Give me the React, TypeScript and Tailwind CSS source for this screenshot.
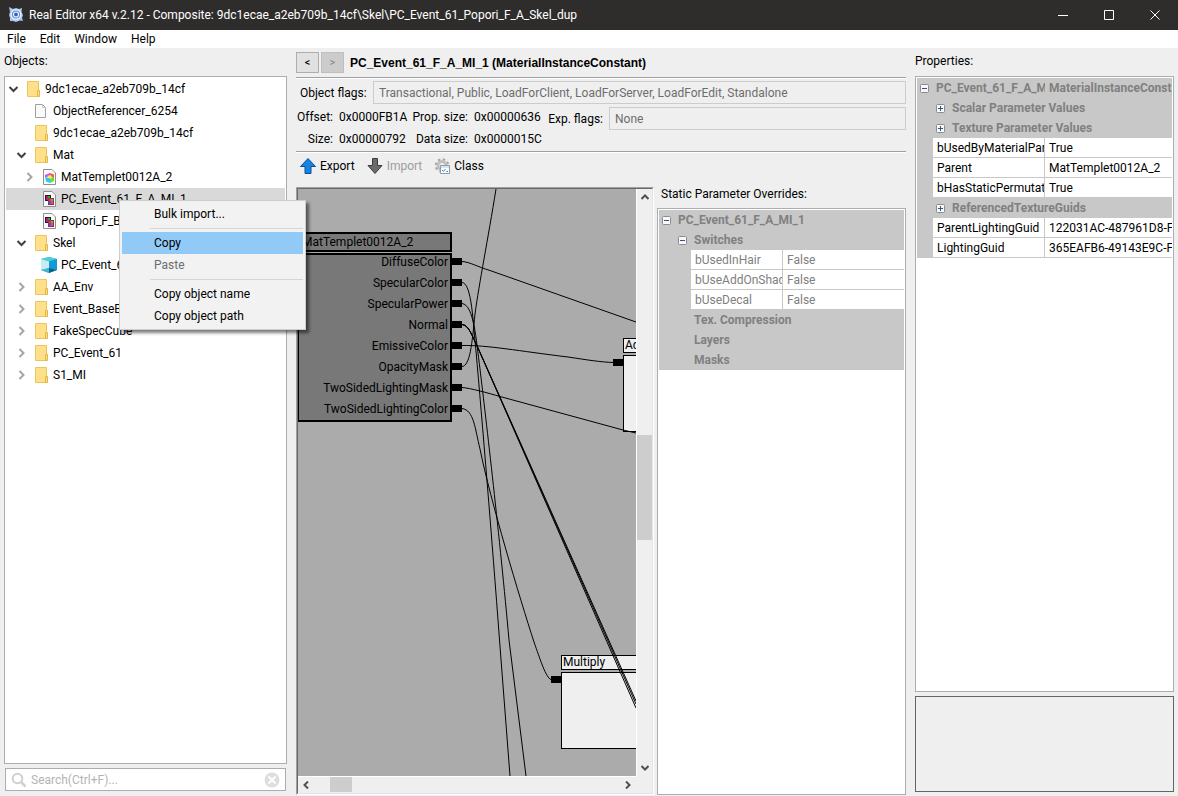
import clsx from "clsx";
import type { ReactNode } from "react";

type IconName = "folder" | "file" | "material" | "instance" | "mesh";

type TreeNode = {
  label: string;
  level: number;
  icon: IconName;
  state?: "open" | "closed";
  selected?: boolean;
};

const tree: TreeNode[] = [
  { label: "9dc1ecae_a2eb709b_14cf", level: 0, icon: "folder", state: "open" },
  { label: "ObjectReferencer_6254", level: 1, icon: "file" },
  { label: "9dc1ecae_a2eb709b_14cf", level: 1, icon: "folder" },
  { label: "Mat", level: 1, icon: "folder", state: "open" },
  { label: "MatTemplet0012A_2", level: 2, icon: "material", state: "closed" },
  { label: "PC_Event_61_F_A_MI_1", level: 2, icon: "instance", selected: true },
  { label: "Popori_F_B", level: 2, icon: "instance" },
  { label: "Skel", level: 1, icon: "folder", state: "open" },
  { label: "PC_Event_6", level: 2, icon: "mesh" },
  { label: "AA_Env", level: 1, icon: "folder", state: "closed" },
  { label: "Event_BaseBo", level: 1, icon: "folder", state: "closed" },
  { label: "FakeSpecCube", level: 1, icon: "folder", state: "closed" },
  { label: "PC_Event_61", level: 1, icon: "folder", state: "closed" },
  { label: "S1_MI", level: 1, icon: "folder", state: "closed" },
];

const levelPadding = ["pl-0", "pl-2", "pl-4"];

const pins = [
  "DiffuseColor",
  "SpecularColor",
  "SpecularPower",
  "Normal",
  "EmissiveColor",
  "OpacityMask",
  "TwoSidedLightingMask",
  "TwoSidedLightingColor",
];

// Wires are in canvas coordinates
const wires = [
  "M164 72.5C172 73 180 78 192 81.500L338 133",
  "M164 93.500C174 94 175 135 178 162C184 230 194 350 201.500 451L212 587",
  "M164 114.500C176 116 178 150 182 180C188 230 202 350 211 451L228 587",
  "M164 135.500C171 136 174 147 180 159L338 512",
  "M164 135.500C171 136 174 147 180 159L338 515",
  "M164 135.500C171 136 174 147 180 159L338 519",
  "M164 156.500C190 156 220 162 270 168C290 171 302 173 315 173.500",
  "M164 177.500C172 177 174 155 177 125C181 95 190 50 198 0",
  "M164 198.500C172 199 190 204 202 207.500L325 241L338 244",
  "M164 219.500C176 221 177 240 182 260C192 310 222 410 236 453C242 470 248 489 253 490.500",
];

function Chevron({ open }: { open: boolean }) {
  return (
    <svg viewBox="0 0 16 16" className="block size-4" fill="none" strokeWidth="2">
      {open ? (
        <path d="M3.500 6L7.500 10L11.500 6" stroke="#404040" />
      ) : (
        <path d="M5.500 4L9.500 8L5.500 12" stroke="#a6a6a6" />
      )}
    </svg>
  );
}

function Page() {
  return (
    <path d="M2.500 0.500H11L14.500 4V15.500H2.500Z" fill="#fafafa" stroke="#8f8f8f" strokeWidth="1" />
  );
}

function TreeIcon({ name }: { name: IconName }) {
  return (
    <svg viewBox="0 0 16 16" className="block size-4 shrink-0">
      {name === "folder" && (
        <>
          <path d="M2.500 0.500H13.500V15.500H2.500Z" fill="#ffe08a" stroke="#ecc658" />
          <path d="M12.500 9.500H14.500V15.500H12.500Z" fill="#ffe08a" stroke="#e3b63f" />
        </>
      )}
      {name === "file" && (
        <>
          <path d="M2.500 1.500H9.500L12.500 4.500V14.500H2.500Z" fill="#fafafa" stroke="#a0a0a0" />
          <path d="M9.500 1.500V4.500H12.500" fill="none" stroke="#c8c8c8" />
        </>
      )}
      {name === "material" && (
        <>
          <Page />
          <path d="M4 6L9 4L9 8L4 8Z" fill="#c650f0" />
          <path d="M9 4L13 5.500V9L9 9Z" fill="#ff5a3c" />
          <path d="M4 8L9 9V14L5 12.500Z" fill="#30c8f0" />
          <path d="M9 9L13 8V12L9 14Z" fill="#5fe03c" />
          <path d="M6 7L9.500 6L11.500 8.500L9 10Z" fill="#ffe65a" />
        </>
      )}
      {name === "instance" && (
        <>
          <Page />
          <path d="M4 4H10V10H4Z" fill="#301820" />
          <path d="M5 5H7V7H5Z" fill="#c02040" />
          <path d="M7 5H9V7H7Z" fill="#20b040" />
          <path d="M5 7H7V9H5Z" fill="#a020c0" />
          <path d="M7 7H13V14H7Z" fill="#a03040" />
          <path d="M8 8H10V10H8Z" fill="#ff3030" />
          <path d="M10 8H12V10H10Z" fill="#30d050" />
          <path d="M8 10H10V13H8Z" fill="#3060ff" />
          <path d="M10 10H12V13H10Z" fill="#f04868" />
        </>
      )}
      {name === "mesh" && (
        <>
          <path d="M0 2L8 0L16 2V13L8 16L0 13Z" fill="#29b6dc" />
          <path d="M0 2L8 0L16 2L8 4.500Z" fill="#4fc9dc" />
          <path d="M0 2L8 4.500V11L0 13Z" fill="#c4eef4" />
          <path d="M8 4.500L16 2V13L8 11Z" fill="#109cd4" />
          <path d="M0 13L8 11V16Z" fill="#43b7c8" />
          <path d="M8 11L16 13L8 16Z" fill="#08648c" />
        </>
      )}
    </svg>
  );
}

function AppIcon() {
  return (
    <svg viewBox="0 0 16 16" className="block size-4">
      <path
        d="M1 0L5 2L8 1L11 2L14 1L13.500 5L15 8L14 11L15 14L12 13.500L8 15L5 14L2 14L2 11L1 8L2 5Z"
        fill="#a9c4ee"
      />
      <circle cx="8" cy="7.500" r="4.800" fill="#5a86d8" stroke="#e4ecfa" strokeWidth="1.500" />
      <circle cx="8" cy="7.500" r="2.500" fill="#2f60c0" stroke="#f4f8ff" strokeWidth="1.200" />
    </svg>
  );
}

function ArrowIcon({ down }: { down?: boolean }) {
  return (
    <svg viewBox="0 0 16 16" className="block size-4">
      {down ? (
        <path d="M5.500 0.500H10.500V7.500H15L8 15.500L1 7.500H5.500Z" fill="#6b6b6b" stroke="#3c3c3c" />
      ) : (
        <path d="M8 0.500L15.500 8.500H11V15.500H5V8.500H0.500Z" fill="#1583e0" stroke="#0b4f98" />
      )}
    </svg>
  );
}

function ClassIcon() {
  return (
    <svg viewBox="0 0 16 16" className="block size-4" fill="none">
      <circle cx="8" cy="7.500" r="4" stroke="#c0c0c0" strokeWidth="3" />
      <circle cx="8" cy="7.500" r="6.300" stroke="#a8a8a8" strokeWidth="2" strokeDasharray="2.500 2.450" />
      <path d="M6.500 7.500H15.500V15.500H6.500Z" fill="#fff" stroke="#8c9aa8" />
      <path d="M7 9H15" stroke="#b8c4d0" />
      <path d="M8 12L9.500 13.500L11.500 11" stroke="#2f86e0" />
      <path d="M12.500 13.500H14" stroke="#2f86e0" />
    </svg>
  );
}

function Expander({ open }: { open: boolean }) {
  return (
    <button aria-label={open ? "Collapse" : "Expand"} className="block size-[9px] shrink-0">
      <svg viewBox="0 0 9 9" className="block size-full">
        <rect x="0.500" y="0.500" width="8" height="8" rx="1" fill="#f8f8f8" stroke="#8c8c8c" />
        <path d={open ? "M2 4.500H7" : "M2 4.500H7M4.500 2V7"} stroke="#35509a" />
      </svg>
    </button>
  );
}

function TitleBar() {
  return (
    <header className="flex h-[30px] shrink-0 items-center bg-[#2f2d2c] pl-2 text-white">
      <AppIcon />
      <h1 className="ml-[5px] flex-1 truncate">
        Real Editor x64 v.2.12 - Composite: 9dc1ecae_a2eb709b_14cf\Skel\PC_Event_61_Popori_F_A_Skel_dup
      </h1>
      {[
        ["Minimize", "M0 5.500H10"],
        ["Maximize", "M0.500 0.500H9.500V9.500H0.500Z"],
        ["Close", "M0.500 0.500L9.500 9.500M9.500 0.500L0.500 9.500"],
      ].map(([name, d]) => (
        <button key={name} aria-label={name} className="flex h-full w-[46px] items-center justify-center">
          <svg viewBox="0 0 10 10" className="size-[10px]" fill="none" stroke="#fff">
            <path d={d} />
          </svg>
        </button>
      ))}
    </header>
  );
}

function ObjectTree() {
  return (
    <section className="flex w-[283px] shrink-0 flex-col pb-[5px]">
      <h2 className="h-7 leading-[26px]">Objects:</h2>
      <ul className="min-h-0 flex-1 overflow-hidden border border-[#abadb3] bg-white p-px">
        {tree.map((node) => (
          <li
            key={`${node.label}-${node.level}`}
            className={clsx(
              "flex h-[22px] items-center gap-[3px]",
              levelPadding[node.level],
              node.selected && "bg-[#d9d9d9]",
            )}
          >
            {node.state ? (
              <button aria-label={`Toggle ${node.label}`}>
                <Chevron open={node.state === "open"} />
              </button>
            ) : (
              <span className="w-4" />
            )}
            <TreeIcon name={node.icon} />
            <span className="pl-px whitespace-nowrap">{node.label}</span>
          </li>
        ))}
      </ul>
      <label className="mx-px mt-1 flex h-[23px] items-center border border-[#abadb3] bg-white px-[5px]">
        <svg viewBox="0 0 16 16" className="size-4" fill="none" stroke="#d0d0d0" strokeWidth="2">
          <circle cx="6.500" cy="6.500" r="4.800" />
          <path d="M10 10L14.500 14.500" strokeWidth="2.500" />
        </svg>
        <input
          aria-label="Search"
          placeholder="Search(Ctrl+F)..."
          className="ml-1 min-w-0 flex-1 outline-none placeholder:text-[#b4b4b4]"
        />
        <button aria-label="Clear search">
          <svg viewBox="0 0 16 16" className="block size-4">
            <circle cx="8" cy="8" r="7.500" fill="#dedede" />
            <path d="M4.500 4.500L11.500 11.500M11.500 4.500L4.500 11.500" stroke="#fff" strokeWidth="2" />
          </svg>
        </button>
      </label>
    </section>
  );
}

function MenuItem({ children, active, disabled }: { children: ReactNode; active?: boolean; disabled?: boolean }) {
  return (
    <button
      role="menuitem"
      disabled={disabled}
      className={clsx(
        "block h-[22px] w-full pl-8 text-left",
        active && "bg-[#91c9f7]",
        disabled && "text-[#6d6d6d]",
      )}
    >
      {children}
    </button>
  );
}

function ContextMenu() {
  return (
    <div
      role="menu"
      className="absolute top-[200px] left-[119px] z-10 w-[187px] border border-[#ccc] bg-[#f2f2f2] p-[2px] shadow-[3px_3px_3px_rgba(0,0,0,0.5)]"
    >
      <MenuItem>Bulk import...</MenuItem>
      <hr className="my-[3px] ml-7 border-[#d5d5d5]" />
      <MenuItem active>Copy</MenuItem>
      <MenuItem disabled>Paste</MenuItem>
      <hr className="my-[3px] ml-7 border-[#d5d5d5]" />
      <MenuItem>Copy object name</MenuItem>
      <MenuItem>Copy object path</MenuItem>
    </div>
  );
}

function Separator() {
  return <hr className="h-[2px] border-t border-b border-t-[#a0a0a0] border-b-white" />;
}

function ObjectInfo() {
  return (
    <>
      <div className="flex h-[21px] items-center">
        <button className="h-full w-[23px] border border-[#adadad] bg-[#e1e1e1] text-[11px]">&lt;</button>
        <button disabled className="ml-[2px] h-full w-[23px] border border-[#bfbfbf] bg-[#ccc] text-[11px] text-[#838383]">
          &gt;
        </button>
        <h2 className="ml-[6px] font-['Liberation_Sans',sans-serif] font-bold">
          PC_Event_61_F_A_MI_1 (MaterialInstanceConstant)
        </h2>
      </div>
      <div className="mt-1">
        <Separator />
      </div>
      <div className="mt-[2px] flex h-[23px] items-center pl-1">
        <label htmlFor="object-flags" className="w-[73px]">
          Object flags:
        </label>
        <input
          id="object-flags"
          disabled
          defaultValue="Transactional, Public, LoadForClient, LoadForServer, LoadForEdit, Standalone"
          className="h-full min-w-0 flex-1 border border-[#ccc] px-[5px] text-[#6d6d6d]"
        />
      </div>
      <div className="mt-[2px] flex h-[45px] items-start">
        <dl className="grid grid-cols-[37px_66px_57px_70px] gap-x-[6px] leading-[22px] whitespace-nowrap">
          <dt className="text-right">Offset:</dt>
          <dd>0x0000FB1A</dd>
          <dt className="text-right">Prop. size:</dt>
          <dd>0x00000636</dd>
          <dt className="text-right">Size:</dt>
          <dd>0x00000792</dd>
          <dt className="text-right">Data size:</dt>
          <dd>0x0000015C</dd>
        </dl>
        <div className="mt-px flex h-[23px] flex-1 items-center">
          <label htmlFor="exp-flags" className="w-[65px] pr-[6px] text-right whitespace-nowrap">
            Exp. flags:
          </label>
          <input
            id="exp-flags"
            disabled
            defaultValue="None"
            className="h-full min-w-0 flex-1 border border-[#ccc] px-[5px] text-[#6d6d6d]"
          />
        </div>
      </div>
      <Separator />
      <div className="flex h-[34px] items-center pb-2 pl-1">
        <button className="flex items-center gap-1">
          <ArrowIcon />
          Export
        </button>
        <button disabled className="ml-3 flex items-center gap-1 text-[#9d9d9d]">
          <ArrowIcon down />
          Import
        </button>
        <button className="ml-3 flex items-center gap-1">
          <ClassIcon />
          Class
        </button>
      </div>
    </>
  );
}

function ExpressionNode({ title, className }: { title: string; className: string }) {
  return (
    <div className={clsx("absolute w-[120px]", className)}>
      <div className="h-[15px] border border-black bg-[#efefef] px-px leading-[13px]">{title}</div>
      <div className="mt-[2px] h-[77px] border border-black bg-[#efefef]">
        <div className="mt-[3px] -ml-[11px] h-[7px] w-[10px] bg-black" />
      </div>
    </div>
  );
}

function MaterialGraph() {
  return (
    <div className="relative min-h-0 min-w-0 overflow-hidden bg-[#ababab]">
      <div className="absolute top-[43px] -left-px w-[155px]">
        <div className="h-5 border-2 border-black bg-[#787878] pl-[3px] leading-4">MatTemplet0012A_2</div>
        <ul className="mt-px h-[169px] border-2 border-black bg-[#787878]">
          {pins.map((pin) => (
            <li key={pin} className="-mr-3 flex h-[21px] -translate-y-1 items-center justify-end gap-[3px]">
              {pin}
              <span className="h-[7px] w-[11px] bg-black" />
            </li>
          ))}
        </ul>
      </div>
      <ExpressionNode title="Add" className="top-[149px] left-[325px]" />
      <ExpressionNode title="Multiply" className="top-[466px] left-[263px]" />
      <svg width="338" height="587" className="absolute top-0 left-0" fill="none" stroke="#000">
        {wires.map((d) => (
          <path key={d} d={d} />
        ))}
      </svg>
    </div>
  );
}

function ScrollArrow({ d, label }: { d: string; label: string }) {
  return (
    <button aria-label={label} className="flex size-4 items-center justify-center">
      <svg viewBox="0 0 8 8" className="size-2" fill="none" stroke="#505050" strokeWidth="2">
        <path d={d} />
      </svg>
    </button>
  );
}

function GraphPanel() {
  return (
    <div className="min-w-0 flex-1 border border-t-[#a0a0a0] border-r-white border-b-white border-l-[#a0a0a0]">
      <div className="grid h-full grid-cols-[1fr_16px] grid-rows-[1fr_17px] border border-t-[#696969] border-r-[#e3e3e3] border-b-[#e3e3e3] border-l-[#696969]">
        <MaterialGraph />
        <div className="flex flex-col items-center border-l border-white">
          <ScrollArrow label="Scroll up" d="M0.500 6L4 2.500L7.500 6" />
          <div className="mt-[230px] h-[105px] w-full bg-[#cdcdcd]" />
          <div className="flex-1" />
          <ScrollArrow label="Scroll down" d="M0.500 2L4 5.500L7.500 2" />
        </div>
        <div className="flex items-center border-t border-white">
          <ScrollArrow label="Scroll left" d="M6 0.500L2.500 4L6 7.500" />
          <div className="ml-4 h-full w-[22px] border-b border-[#efefef] bg-[#cdcdcd]" />
          <div className="flex-1" />
          <ScrollArrow label="Scroll right" d="M2 0.500L5.500 4L2 7.500" />
        </div>
      </div>
    </div>
  );
}

function Category({ children, open, indent }: { children: ReactNode; open?: boolean; indent?: boolean }) {
  return (
    <div className={clsx("flex items-center gap-[7px] overflow-hidden pl-[3px]", indent && "ml-4")}>
      {open === undefined ? <span className="w-[9px]" /> : <Expander open={open} />}
      {children}
    </div>
  );
}

const overrides = [
  ["bUsedInHair", "False"],
  ["bUseAddOnShad", "False"],
  ["bUseDecal", "False"],
];

function StaticOverrides() {
  return (
    <section className="flex w-[249px] shrink-0 flex-col">
      <h2 className="h-[21px] pl-1 leading-[14px]">Static Parameter Overrides:</h2>
      <div className="min-h-0 flex-1 border border-[#abadb3] bg-white p-px">
        <table className="w-full table-fixed border-separate border-spacing-0 bg-[#c8c8c8] whitespace-nowrap text-[#808080]">
          <colgroup>
            <col className="w-8" />
            <col className="w-[92px]" />
            <col />
          </colgroup>
          <tbody>
            <tr className="h-5">
              <th colSpan={3} className="p-0">
                <Category open>PC_Event_61_F_A_MI_1</Category>
              </th>
            </tr>
            <tr className="h-5">
              <th colSpan={3} className="p-0">
                <Category open indent>
                  Switches
                </Category>
              </th>
            </tr>
            {overrides.map(([name, value]) => (
              <tr key={name} className="h-5">
                <td className="p-0" />
                <td className="overflow-hidden border-r border-b border-[#c8c8c8] bg-white p-0 pl-1">{name}</td>
                <td className="border-b border-[#c8c8c8] bg-white p-0 pl-1">{value}</td>
              </tr>
            ))}
            {["Tex. Compression", "Layers", "Masks"].map((name) => (
              <tr key={name} className="h-5">
                <th colSpan={3} className="p-0">
                  <Category indent>{name}</Category>
                </th>
              </tr>
            ))}
          </tbody>
        </table>
      </div>
    </section>
  );
}

const properties: [string, string?][] = [
  ["Scalar Parameter Values"],
  ["Texture Parameter Values"],
  ["bUsedByMaterialPar", "True"],
  ["Parent", "MatTemplet0012A_2"],
  ["bHasStaticPermutati", "True"],
  ["ReferencedTextureGuids"],
  ["ParentLightingGuid", "122031AC-487961D8-F8"],
  ["LightingGuid", "365EAFB6-49143E9C-F7"],
];

function Properties() {
  return (
    <section className="flex w-[259px] shrink-0 flex-col pb-1">
      <h2 className="h-7 leading-[26px]">Properties:</h2>
      <div className="min-h-0 flex-1 border border-[#abadb3] bg-white p-px">
        <table className="w-full table-fixed border-separate border-spacing-0 bg-[#c8c8c8] whitespace-nowrap">
          <colgroup>
            <col className="w-4" />
            <col className="w-[112px]" />
            <col />
          </colgroup>
          <tbody>
            <tr className="h-5 text-left text-[#808080]">
              <th colSpan={2} className="overflow-hidden p-0">
                <Category open>PC_Event_61_F_A_M</Category>
              </th>
              <th className="overflow-hidden p-0 pl-1">MaterialInstanceConst</th>
            </tr>
            {properties.map(([name, value]) =>
              value ? (
                <tr key={name} className="h-5">
                  <td className="p-0" />
                  <td className="overflow-hidden border-r border-b border-[#c8c8c8] bg-white p-0 pl-1">{name}</td>
                  <td className="overflow-hidden border-b border-[#c8c8c8] bg-white p-0 pl-1">{value}</td>
                </tr>
              ) : (
                <tr key={name} className="h-5 text-[#808080]">
                  <th colSpan={3} className="p-0">
                    <Category open={false} indent>
                      {name}
                    </Category>
                  </th>
                </tr>
              ),
            )}
          </tbody>
        </table>
      </div>
      <div className="mt-1 h-24 border border-[#646464]" />
    </section>
  );
}

export default function App() {
  return (
    <div className="relative flex h-screen flex-col overflow-hidden bg-[#efefef] font-[Roboto,sans-serif] text-[12px] leading-[16px] text-black">
      <TitleBar />
      <nav className="flex h-[18px] shrink-0 items-center bg-white">
        {["File", "Edit", "Window", "Help"].map((item) => (
          <button key={item} className="px-[7px]">
            {item}
          </button>
        ))}
      </nav>
      <main className="flex min-h-0 flex-1 gap-[9px] px-1">
        <ObjectTree />
        <section className="flex min-w-0 flex-1 flex-col pt-1 pb-px">
          <ObjectInfo />
          <div className="flex min-h-0 flex-1 gap-[3px]">
            <GraphPanel />
            <StaticOverrides />
          </div>
        </section>
        <Properties />
      </main>
      <ContextMenu />
    </div>
  );
}
